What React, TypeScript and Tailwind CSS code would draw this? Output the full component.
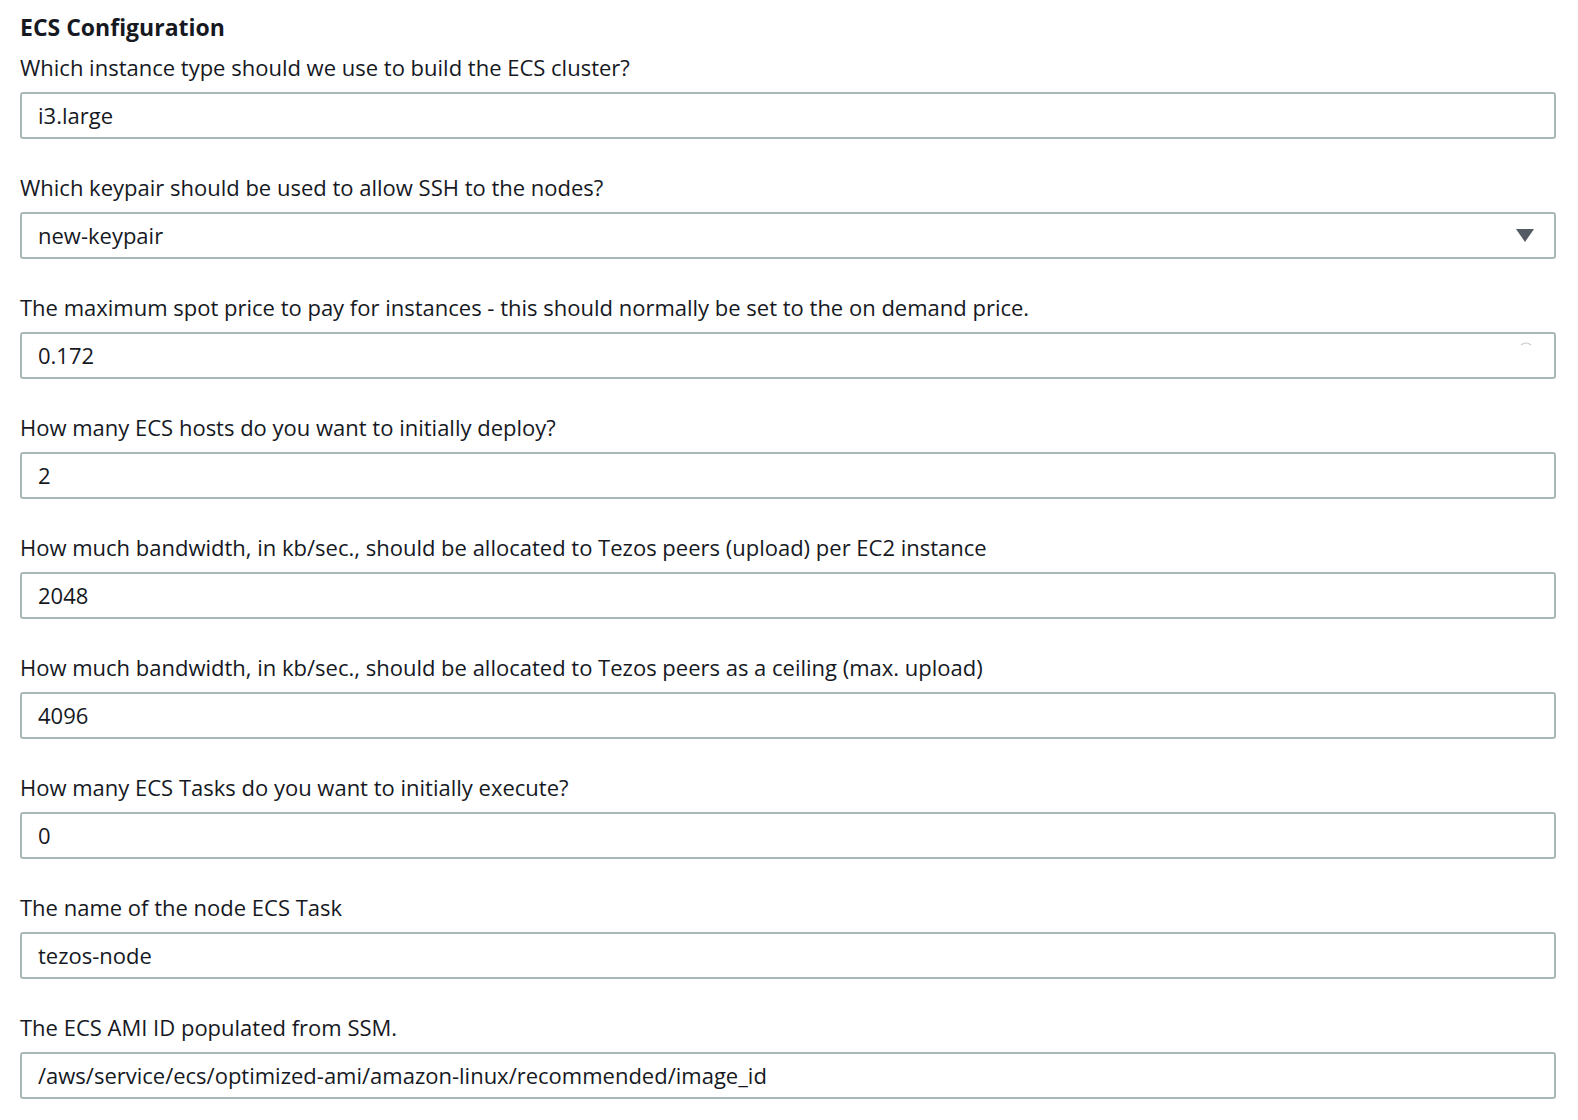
import React from "react";

const fields: { label: string; value: string; select?: boolean; spin?: boolean }[] = [
  { label: "Which instance type should we use to build the ECS cluster?", value: "i3.large" },
  { label: "Which keypair should be used to allow SSH to the nodes?", value: "new-keypair", select: true },
  { label: "The maximum spot price to pay for instances - this should normally be set to the on demand price.", value: "0.172", spin: true },
  { label: "How many ECS hosts do you want to initially deploy?", value: "2" },
  { label: "How much bandwidth, in kb/sec., should be allocated to Tezos peers (upload) per EC2 instance", value: "2048" },
  { label: "How much bandwidth, in kb/sec., should be allocated to Tezos peers as a ceiling (max. upload)", value: "4096" },
  { label: "How many ECS Tasks do you want to initially execute?", value: "0" },
  { label: "The name of the node ECS Task", value: "tezos-node" },
  { label: "The ECS AMI ID populated from SSM.", value: "/aws/service/ecs/optimized-ami/amazon-linux/recommended/image_id" },
];

export default function App() {
  return (
    <div
      className="bg-white w-full h-[1120px] pl-[20px] pr-[22px] pt-[12px] text-[#16191f] overflow-hidden"
      style={{ fontFamily: '"Open Sans", "Noto Sans", sans-serif' }}
    >
      <h2 className="text-[23px] leading-[30px] font-bold">ECS Configuration</h2>
      <div className="flex flex-col gap-[33px] mt-[10px]">
        {fields.map((f, i) => (
          <div key={i} className="flex flex-col">
            <div className="text-[22px] leading-[30px] mb-[10px] whitespace-nowrap">{f.label}</div>
            <div className="relative h-[47px] border-2 border-[#aab7b8] rounded-[3px] flex items-center pl-[16px] text-[22px]">
              <span>{f.value}</span>
              {f.select && (
                <svg className="absolute right-[20px] top-[15px]" width="18" height="13" viewBox="0 0 18 13">
                  <path d="M0 0 H18 L9 13 Z" fill="#545b64" />
                </svg>
              )}
              {f.spin && (
                <svg className="absolute right-[22px] top-[7px]" width="12" height="6" viewBox="0 0 12 6">
                  <path d="M1 4 Q6 0 11 4" stroke="#c8cccc" strokeWidth="1.2" fill="none" />
                </svg>
              )}
            </div>
          </div>
        ))}
      </div>
    </div>
  );
}
